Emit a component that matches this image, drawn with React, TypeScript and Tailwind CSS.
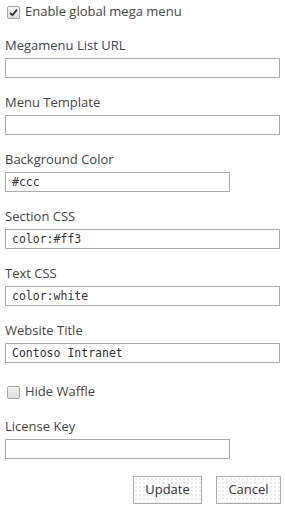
import { memo } from "react";

const labelCls = "block h-[18px] leading-[18px] text-[13px] text-[#444]";
const inputCls =
  "block h-[20px] border border-[#ababab] bg-white px-[6px] text-[11.5px] text-[#333] outline-none";
const mono = { fontFamily: '"DejaVu Sans Mono", "Liberation Mono", monospace' };
const btnCls =
  "h-[28px] border border-[#ababab] bg-white bg-[radial-gradient(#ececec_1px,transparent_1px)] bg-[length:4px_4px] text-[13px] text-[#333]";

function CheckBox({ checked, label }: { checked: boolean; label: string }) {
  return (
    <label className="flex h-[18px] items-center gap-[5px] pl-[7px] text-[13px] text-[#444]">
      <span className="flex h-[13px] w-[13px] items-center justify-center rounded-[2px] border border-[#a6a6a6] bg-[linear-gradient(#f4f4f4,#dcdcdc)]">
        {checked && (
          <svg width="9" height="9" viewBox="0 0 9 9">
            <path d="M1 4.8 L3.4 7.2 L8 1.6" fill="none" stroke="#333" strokeWidth="1.8" />
          </svg>
        )}
      </span>
      {label}
    </label>
  );
}

function Field({ label, value = "", width = "w-[275px]" }: { label: string; value?: string; width?: string }) {
  return (
    <div className="mb-[15px]">
      <span className={labelCls}>{label}</span>
      <input readOnly value={value} style={mono} className={`${inputCls} ${width} mt-[4px]`} />
    </div>
  );
}

function MegaMenuSettings() {
  return (
    <div className="h-[513px] w-[285px] bg-white pt-[3px]" style={{ fontFamily: '"Open Sans", "Noto Sans", sans-serif' }}>
      <div className="pl-[5px]">
        <div className="-ml-[5px] mb-[15px]">
          <CheckBox checked label="Enable global mega menu" />
        </div>
        <Field label="Megamenu List URL" />
        <Field label="Menu Template" />
        <Field label="Background Color" value="#ccc" width="w-[225px]" />
        <Field label="Section CSS" value="color:#ff3" />
        <Field label="Text CSS" value="color:white" />
        <Field label="Website Title" value="Contoso Intranet" />
        <div className="-ml-[5px] mb-[16px] mt-[20px]">
          <CheckBox checked={false} label="Hide Waffle" />
        </div>
        <Field label="License Key" width="w-[225px]" />
      </div>
      <div className="mt-[17px] flex justify-end gap-[14px] pr-[4px]">
        <button className={`${btnCls} w-[69px]`}>Update</button>
        <button className={`${btnCls} w-[65px]`}>Cancel</button>
      </div>
    </div>
  );
}

export default memo(MegaMenuSettings);
